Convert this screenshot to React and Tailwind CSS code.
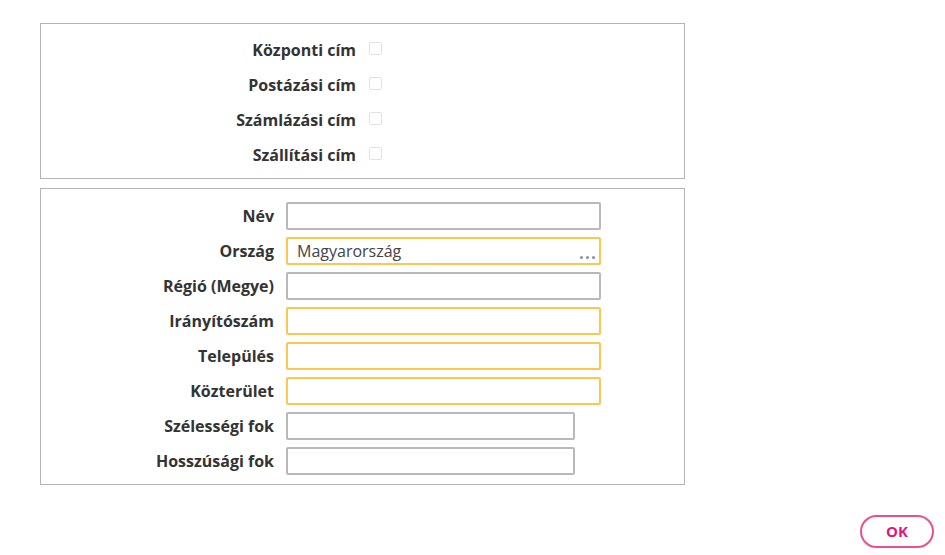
const checks = ['Központi cím', 'Postázási cím', 'Számlázási cím', 'Szállítási cím'];

const fields = [
  { label: 'Név', w: 'w-[315px]' },
  { label: 'Ország', w: 'w-[315px]', required: true, value: 'Magyarország', dots: true },
  { label: 'Régió (Megye)', w: 'w-[315px]' },
  { label: 'Irányítószám', w: 'w-[315px]', required: true },
  { label: 'Település', w: 'w-[315px]', required: true },
  { label: 'Közterület', w: 'w-[315px]', required: true },
  { label: 'Szélességi fok', w: 'w-[289px]' },
  { label: 'Hosszúsági fok', w: 'w-[289px]' },
];

export default function App() {
  return (
    <div className="w-[945px] h-[555px] bg-white font-['Open_Sans',sans-serif] text-[#333] relative">
      <div className="pl-10 pt-[23px] w-[685px]">
        {/* Address types */}
        <div className="border border-[#b4b4b4] h-[156px] flex flex-col pt-[8px]">
          {checks.map((c) => (
            <div key={c} className="flex items-center h-[35px]">
              <span className="w-[315px] text-right text-[16px] font-bold">{c}</span>
              <span className="ml-[13px] -mt-[3px] w-[13px] h-[13px] border border-[#e2e2e2] rounded-[2px]" />
            </div>
          ))}
        </div>

        {/* Address fields */}
        <div className="mt-[9px] border border-[#b4b4b4] h-[297px] pt-[13px] flex flex-col gap-[7px]">
          {fields.map((f) => (
            <div key={f.label} className="flex items-center h-[28px]">
              <span className="w-[233px] text-right text-[16px] font-bold">{f.label}</span>
              <div
                className={`ml-[12px] ${f.w} h-[28px] rounded-[2px] border-2 ${
                  f.required ? 'border-[#ffc54f]' : 'border-[#b9b9b9]'
                } flex items-center justify-between pl-[9px] pr-[4px]`}
              >
                <span className="text-[16px] text-[#444]">{f.value || ''}</span>
                {f.dots && (
                  <span className="flex gap-[3px] self-end mb-[4px]">
                    <span className="w-[3px] h-[3px] rounded-full bg-[#7d8fb8]" />
                    <span className="w-[3px] h-[3px] rounded-full bg-[#7d8fb8]" />
                    <span className="w-[3px] h-[3px] rounded-full bg-[#7d8fb8]" />
                  </span>
                )}
              </div>
            </div>
          ))}
        </div>
      </div>

      <div className="absolute right-[11px] bottom-[7px]">
        <button className="w-[74px] h-[33px] rounded-full border-2 border-[#ec4f91] text-[#e2177b] font-bold text-[15px] bg-white">
          OK
        </button>
      </div>
    </div>
  );
}
